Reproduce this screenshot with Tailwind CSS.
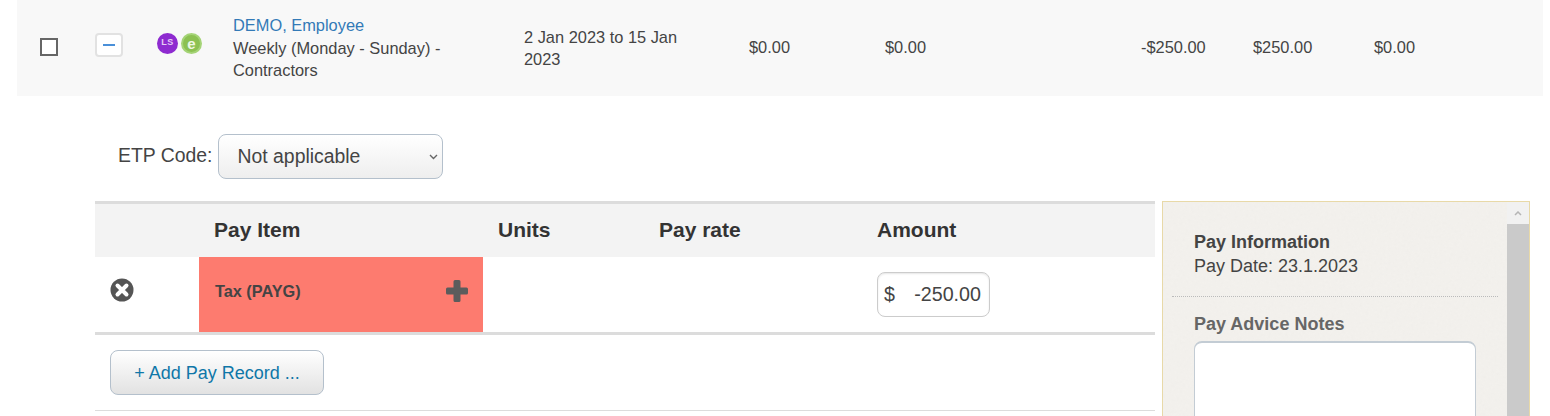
<!DOCTYPE html>
<html lang="en">
<head>
    <meta charset="UTF-8">
    <title>Pay Run</title>
    <script src="https://cdn.jsdelivr.net/npm/@tailwindcss/browser@4"></script>
</head>
<body class="h-[416px] overflow-hidden bg-white font-['Liberation_Sans',Arial,sans-serif] text-[16.4px] text-[#444]">
    <!-- Employee row -->
    <div class="ml-[17px] w-[1526px] h-[96px] bg-[#f8f8f8] flex items-center">
        <div class="w-[78px] pl-[23px]">
            <div class="w-[18px] h-[18px] mb-[2px] border-2 border-[#666] bg-white"></div>
        </div>
        <div class="w-[62px] mb-[7px]">
            <div class="w-[28px] h-[24px] border-2 border-[#e2e2e2] rounded-[4px] bg-white flex items-center justify-center">
                <div class="w-[12px] h-[2px] bg-[#4a90d9]"></div>
            </div>
        </div>
        <div class="w-[76px] flex gap-[3px] mb-[10px]">
            <div class="w-[21px] h-[21px] rounded-full bg-[#8e2bd0] text-[#e6ccf5] text-[9px] tracking-[0.5px] font-bold flex items-center justify-center">LS</div>
            <div class="w-[21px] h-[21px] rounded-full bg-[#8cc152] border-2 border-[#a5d477] text-[#eef7e4] text-[15px] leading-none font-bold flex items-center justify-center">e</div>
        </div>
        <div class="w-[291px] leading-[22.5px] pr-[60px]">
            <div class="text-[#337ab7]">DEMO, Employee</div>
            <div>Weekly (Monday - Sunday) - Contractors</div>
        </div>
        <div class="w-[225px] leading-[22.5px] pr-[40px]">2 Jan 2023 to 15 Jan 2023</div>
        <div class="w-[136px] mb-[2px]">$0.00</div>
        <div class="w-[256px] mb-[2px]">$0.00</div>
        <div class="w-[112px] mb-[2px]">-$250.00</div>
        <div class="w-[121px] mb-[2px]">$250.00</div>
        <div class="mb-[2px]">$0.00</div>
    </div>

    <div class="flex ml-[95px] mt-[38px]">
        <div class="w-[1060px]">
            <!-- ETP code -->
            <div class="flex items-center pl-[23px] h-[45px]">
                <span class="text-[19.4px] mr-[5px] -mt-[1px]">ETP Code:</span>
                <div class="relative w-[225px] h-[45px] border border-[#b4c0cc] rounded-[8px] bg-gradient-to-b from-white to-[#eeeeee] flex items-center pl-[19px] text-[19.4px]">
                    Not applicable
                    <svg class="absolute right-[4px] top-[19px] w-[9px] h-[6px]" viewBox="0 0 9 6" fill="none" stroke="#666" stroke-width="1.4"><path d="M1 1l3.500 3.500L8 1"/></svg>
                </div>
            </div>

            <!-- Pay items table -->
            <div class="mt-[22px] border-t-[3px] border-[#dcdcdc] bg-[#f3f3f3] h-[56px] pb-[2px] flex items-center text-[21px] font-bold text-[#333]">
                <div class="w-[119px]"></div>
                <div class="w-[284px]">Pay Item</div>
                <div class="w-[161px]">Units</div>
                <div class="w-[218px]">Pay rate</div>
                <div>Amount</div>
            </div>
            <div class="h-[78px] border-b-[3px] border-[#dcdcdc] flex">
                <div class="w-[104px] pl-[15px] pt-[21px]">
                    <svg class="w-[24px] h-[24px]" viewBox="0 0 24 24">
                        <circle cx="12" cy="12" r="11.5" fill="#555"/>
                        <path d="M7.500 7.500l9 9M16.500 7.500l-9 9" stroke="#fff" stroke-width="4" stroke-linecap="round"/>
                    </svg>
                </div>
                <div class="w-[284px] h-[75px] bg-[#fd7b6f] flex items-center justify-between pl-[16px] pr-[15px] pb-[7px] text-[16.3px] font-bold text-[#444]">
                    <span>Tax (PAYG)</span>
                    <svg class="w-[22px] h-[22px]" viewBox="0 0 22 22"><path d="M9 0h4q1.500 0 1.500 1.500V7.500H20.500Q22 7.500 22 9v4q0 1.500-1.500 1.500H14.500V20.500Q14.500 22 13 22H9q-1.500 0-1.500-1.500V14.500H1.500Q0 14.500 0 13V9q0-1.500 1.500-1.500H7.500V1.500Q7.500 0 9 0z" fill="#5c5c5c"/></svg>
                </div>
                <div class="w-[394px]"></div>
                <div class="mt-[15px] w-[113px] h-[45px] border border-[#ccc] rounded-[8px] bg-white flex items-center justify-between px-[6px] pr-[8px] text-[19.7px] shadow-[inset_0_1px_2px_rgba(0,0,0,0.1)]">
                    <span>$</span>
                    <span>-250.00</span>
                </div>
            </div>
            <div class="h-[76px] border-b border-[#dcdcdc] pl-[15px] pt-[15px]">
                <div class="w-[214px] h-[45px] pt-[1px] border border-[#b4c0cc] rounded-[8px] bg-gradient-to-b from-white to-[#e2e2e2] text-[#0f77a8] text-[18px] flex items-center justify-center">+ Add Pay Record ...</div>
            </div>
        </div>

        <!-- Side panel -->
        <div class="relative ml-[7px] mt-[67px] w-[368px] h-[215px] overflow-hidden border border-b-0 border-[#e8d9a8] bg-[#f3f1ed] flex">
            <svg class="absolute inset-0 w-full h-full opacity-[0.03]">
                <filter id="paper"><feTurbulence type="fractalNoise" baseFrequency="0.35" numOctaves="2"/><feColorMatrix type="saturate" values="0"/></filter>
                <rect width="100%" height="100%" filter="url(#paper)"/>
            </svg>
            <div class="relative w-[344px] pl-[31px] pr-[8px] pt-[28px]">
                <div class="font-bold text-[18px] leading-[24px]">Pay Information</div>
                <div class="text-[18px] leading-[25px]">Pay Date: 23.1.2023</div>
                <div class="-ml-[22px] mt-[17px] border-t border-dotted border-[#bbb]"></div>
                <div class="font-bold text-[18px] text-[#666] mt-[15px] leading-[24px]">Pay Advice Notes</div>
                <div class="w-[282px] h-[200px] mt-[5px] bg-white border border-[#c3ccd4] border-t-2 rounded-[8px]"></div>
            </div>
            <div class="relative w-[22px] ml-[1px] shrink-0">
                <div class="h-[22px] bg-[#f1f1f1] flex items-center justify-center">
                    <svg class="w-[8px] h-[5px]" viewBox="0 0 8 5" fill="none" stroke="#b5b5b5" stroke-width="1.5"><path d="M1 4l3-3 3 3"/></svg>
                </div>
                <div class="h-[276px] bg-[#cacaca]"></div>
            </div>
        </div>
    </div>
</body>
</html>
